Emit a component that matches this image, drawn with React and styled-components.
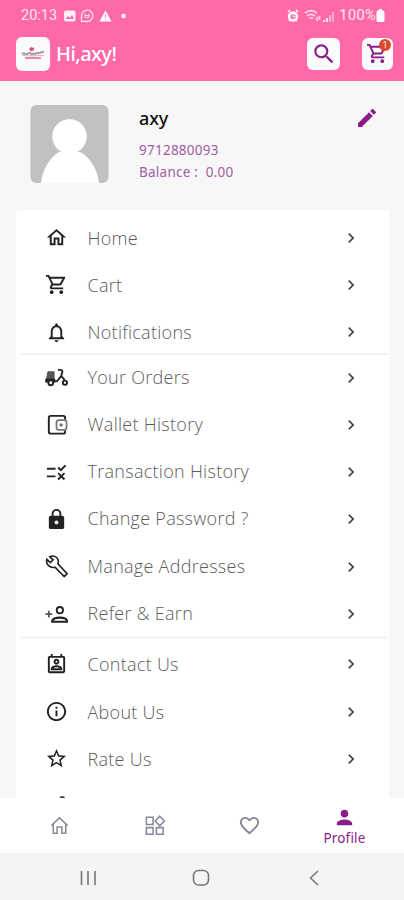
import React from "react"
import styled, { createGlobalStyle } from "styled-components"
import {
  MdChevronRight,
  MdEdit,
  MdInfoOutline,
  MdLock,
  MdNotificationsNone,
  MdOutlineHome,
  MdOutlinePermContactCalendar,
  MdOutlineShoppingCart,
  MdFavoriteBorder,
  MdPerson,
  MdRule,
  MdSearch,
  MdStarOutline,
} from "react-icons/md"

const sections = [
  [
    { label: "Home", icon: <MdOutlineHome /> },
    { label: "Cart", icon: <MdOutlineShoppingCart /> },
    { label: "Notifications", icon: <MdNotificationsNone /> },
  ],
  [
    { label: "Your Orders", icon: <ScooterIcon /> },
    { label: "Wallet History", icon: <WalletIcon /> },
    { label: "Transaction History", icon: <MdRule /> },
    { label: "Change Password ?", icon: <MdLock /> },
    { label: "Manage Addresses", icon: <WrenchIcon /> },
    { label: "Refer & Earn", icon: <PersonPlusIcon /> },
  ],
  [
    { label: "Contact Us", icon: <MdOutlinePermContactCalendar /> },
    { label: "About Us", icon: <MdInfoOutline /> },
    { label: "Rate Us", icon: <MdStarOutline /> },
  ],
]

export default function App() {
  return (
    <>
      <GlobalStyle />
      <Screen>
        <Header>
          <StatusBar>
            <Time>20:13</Time>
            <StatusLeft />
            <StatusRight />
            <Battery>100%</Battery>
            <BatteryIcon />
          </StatusBar>
          <TitleBar>
            <Logo>
              <LogoMark />
            </Logo>
            <Title>Hi,axy!</Title>
            <HeaderButton aria-label="Search" $size={26}>
              <MdSearch />
            </HeaderButton>
            <HeaderButton aria-label="Cart" $size={23} $last>
              <MdOutlineShoppingCart />
              <Badge>1</Badge>
            </HeaderButton>
          </TitleBar>
        </Header>

        <Content>
          <Profile>
            <Avatar />
            <Info>
              <Name>axy</Name>
              <Detail>9712880093</Detail>
              <Detail>Balance :&nbsp; 0.00</Detail>
            </Info>
            <EditButton aria-label="Edit">
              <MdEdit />
            </EditButton>
          </Profile>
          <Panel>
            {sections.map((items, i) => (
              <Section key={i}>
                {items.map((item) => (
                  <Row key={item.label}>
                    <RowIcon>{item.icon}</RowIcon>
                    <RowLabel $up={i === 1}>{item.label}</RowLabel>
                    <MdChevronRight />
                  </Row>
                ))}
              </Section>
            ))}
            <NextRow>
              <ShareIcon />
            </NextRow>
          </Panel>
        </Content>

        <TabBar>
          <Tab>
            <HomeTabIcon />
          </Tab>
          <Tab>
            <WidgetsIcon />
          </Tab>
          <Tab>
            <MdFavoriteBorder />
          </Tab>
          <Tab $active>
            <MdPerson />
            <span>Profile</span>
          </Tab>
        </TabBar>
        <SystemNav>
          <svg width="18" height="18" viewBox="0 0 18 18">
            <path d="M2.500 2v14M9 2v14M16 2v14" />
          </svg>
          <svg width="18" height="18" viewBox="0 0 18 18">
            <rect x="1.500" y="1.500" width="15" height="14.500" rx="5" />
          </svg>
          <svg width="18" height="18" viewBox="0 0 18 18">
            <path d="m13 2-7.500 7 7.500 7" />
          </svg>
        </SystemNav>
      </Screen>
    </>
  )
}

function StatusLeft() {
  return (
    <svg width="66" height="14" viewBox="0 0 66 14">
      <rect x="1" y="1.5" width="11.500" height="11" rx="2" fill="#ffeef5" />
      <path d="m2.500 10 2.500-3 2 2 2-3 2 4z" fill="#ff69a8" />
      <path
        d="M18.500 12.300V7a5.700 5.700 0 1 1 5.700 5.500z"
        fill="none"
        stroke="#ffe0ec"
        strokeWidth="1.300"
      />
      <path d="M22 4.500v4h4v-4M22 6.500h4" fill="none" stroke="#ffe0ec" />
      <path d="m42.500 1.500 6 11h-12z" fill="#fff" />
      <path d="M42.500 5v4M42.500 10v1.300" stroke="#ff8dbd" strokeWidth="1.200" />
      <circle cx="60.500" cy="7" r="2.200" fill="#fff" />
    </svg>
  )
}

function StatusRight() {
  return (
    <StatusIcons width="48" height="14" viewBox="0 0 48 14">
      <circle cx="6" cy="7.500" r="3.900" fill="none" stroke="#fff" strokeWidth="2.600" />
      <path d="M6 5.500v2.200h2" fill="none" stroke="#fff" />
      <path d="m1 3 2-2M9 1l2 2M2 12l1-1M10 12l-1-1" stroke="#fff" strokeWidth="1.600" />
      <path
        d="M18 4c4-3.200 8-3.200 12 0M20 7c3-2.200 5.500-2.200 8 0M22.500 9.500c1.500-1 2-1 3.500 0M30 8v4M32.500 7v4"
        fill="none"
        stroke="#ffd5e7"
        strokeWidth="1.700"
      />
      <path d="M37 11v2M40 9v4" stroke="#fff" strokeWidth="1.700" />
      <path d="M43 6v7M46 3v10" stroke="#ffb5d4" strokeWidth="1.800" />
    </StatusIcons>
  )
}

function BatteryIcon() {
  return (
    <svg width="9" height="13" viewBox="0 0 9 13">
      <path d="M3 0h3v1.500h1.500l1 1.500v9l-1 1h-6l-1-1v-9l1-1.500H3z" fill="#fff" />
    </svg>
  )
}

function LogoMark() {
  return (
    <svg width="26" height="16" viewBox="0 0 26 16">
      <path d="M9 3 11 1l2 1 1-1v3l-3 1.500z" fill="#d2567f" />
      <path
        d="M2 8c2-2 3 1 5 0s3-2 4 0 2-2 3 0 2-2 4-1 3-2 6-1"
        fill="none"
        stroke="#a99dab"
        strokeWidth="2"
      />
      <path d="M2 9.500q10 1 22-.3" fill="none" stroke="#d9b8c6" />
      <path d="M5 12h16" stroke="#e0708f" strokeWidth="1.600" />
    </svg>
  )
}

function Avatar() {
  return (
    <AvatarBox viewBox="0 0 78 78">
      <rect width="78" height="78" rx="6" fill="#c1c1c1" />
      <circle cx="39" cy="31.500" r="17.300" fill="#fff" />
      <path d="M10.500 78c2-16 10-26 18-31h21c9 5 17 15 19 31z" fill="#fff" />
    </AvatarBox>
  )
}

function ScooterIcon() {
  return (
    <svg viewBox="0 0 24 24" fill="none" stroke="currentColor">
      <path d="M3 6h6.500v8H1.500z" fill="#555" stroke="#555" strokeWidth="1" />
      <path d="M.5 13.500h10V17H.5z" fill="currentColor" strokeWidth=".5" />
      <circle cx="6" cy="17.500" r="2.500" fill="#fff" strokeWidth="2" />
      <circle cx="20.800" cy="17.500" r="2.200" strokeWidth="2" />
      <path d="M13.500 4h2.800c2 0 2 1.500 1.600 3l-1 3.500-4.500 5.500H9M17 10.500l3.500 4" strokeWidth="2" />
    </svg>
  )
}

function WalletIcon() {
  return (
    <svg viewBox="0 0 24 24" fill="none" stroke="currentColor">
      <path
        d="M21 7V5a2 2 0 0 0-2-2H6a2 2 0 0 0-2 2v14.500a2 2 0 0 0 2 2h13a2 2 0 0 0 2-2V18"
        strokeWidth="2"
      />
      <rect x="12" y="7.500" width="10.500" height="10" rx="2.500" stroke="#777" strokeWidth="1.800" />
      <circle cx="16.800" cy="12.500" r="1.300" fill="#777" stroke="#777" />
    </svg>
  )
}

function WrenchIcon() {
  return (
    <svg viewBox="0 0 24 24" fill="none" stroke="currentColor" strokeWidth="1.700">
      <path d="M2 4.500 5.500 8 8.500 5 5 1.800c3-1.300 6.500-.4 8 2 1.200 2 1.200 3.800.5 5.500L23 19.500 20 22.500l-9.500-9.800c-2.500.8-5 .2-7-1.800-1.700-1.700-2.300-4-1.500-6.400Z" />
    </svg>
  )
}

function PersonPlusIcon() {
  return (
    <svg viewBox="0 0 24 24" fill="none" stroke="currentColor">
      <path d="M.5 11.500h7M4 8v7" stroke="#555" strokeWidth="1.800" />
      <circle cx="15.500" cy="7.500" r="3.300" strokeWidth="1.900" />
      <path d="M7.500 19.500v-1c2-4.300 14-4.300 15.500 0v1z" strokeWidth="2.200" />
    </svg>
  )
}

function ShareIcon() {
  return (
    <svg viewBox="0 0 24 24" fill="#444">
      <circle cx="18" cy="5" r="3" />
      <circle cx="6" cy="12" r="3" />
      <circle cx="18" cy="19" r="3" />
    </svg>
  )
}

function HomeTabIcon() {
  return (
    <svg viewBox="0 0 24 24" fill="none" stroke="currentColor" strokeWidth="1.600">
      <path d="m3.500 12 8.500-8 8.500 8M5.500 10.500V20h4v-6.500h5V20h4v-9.500" />
    </svg>
  )
}

function WidgetsIcon() {
  return (
    <svg viewBox="0 0 24 24" fill="none" stroke="currentColor" strokeWidth="1.600">
      <path d="M3.500 3.500h7v7.500h-7zM3.500 14.200h7v7h-7zM14 14.200h7v7h-7zM17.500 2.300l4.800 5-4.800 5-4.800-5z" />
    </svg>
  )
}

const GlobalStyle = createGlobalStyle`
  * {
    box-sizing: border-box;
  }
  body {
    margin: 0;
    font-family: "Open Sans", "Noto Sans", sans-serif;
  }
  svg {
    display: block;
    flex-shrink: 0;
  }
  button {
    border: 0;
    padding: 0;
    font: inherit;
  }
`

const Screen = styled.div`
  display: flex;
  flex-direction: column;
  width: 404px;
  height: 900px;
  overflow: hidden;
  background: #f7f7f7;
`

const Header = styled.header`
  height: 81px;
  background: #ff69a8;
`

const StatusBar = styled.div`
  display: flex;
  align-items: center;
  height: 31px;
  padding: 0 19px 0 21px;
  color: #ffe6f0;
`

const Time = styled.span`
  width: 42px;
  font-family: Roboto, sans-serif;
  font-size: 14.5px;
`

const StatusIcons = styled.svg`
  margin-left: auto;
`

const Battery = styled.span`
  margin: 0 0 0 4px;
  font-family: Roboto, sans-serif;
  font-size: 14.5px;
  letter-spacing: 0.4px;
`

const TitleBar = styled.div`
  display: flex;
  align-items: center;
  height: 45px;
  padding: 0 11px 0 16px;
`

const Logo = styled.div`
  display: grid;
  place-items: center;
  width: 34px;
  height: 34px;
  border-radius: 6px;
  background: #fafafa;
`

const Title = styled.h1`
  margin: 0 auto 0 6px;
  color: #fff;
  font-family: "Noto Sans", sans-serif;
  font-size: 20px;
  font-weight: 500;
  letter-spacing: -0.55px;
`

const HeaderButton = styled.button`
  position: relative;
  display: grid;
  place-items: center;
  width: ${({ $last }) => ($last ? "31px" : "33px")};
  height: 32px;
  margin-left: ${({ $last }) => ($last ? "22px" : "0")};
  border-radius: 6px;
  background: #fafafa;
  color: #861f87;

  svg {
    width: ${({ $size }) => $size}px;
    height: ${({ $size }) => $size}px;
  }
`

const Badge = styled.span`
  position: absolute;
  top: 1px;
  right: 2px;
  width: 12px;
  height: 12px;
  border-radius: 50%;
  background: #dc4a2c;
  color: #fff;
  font-size: 9px;
  line-height: 12px;
  text-align: center;
`

const Content = styled.main`
  height: 717px;
  overflow: hidden;
`

const Profile = styled.section`
  display: flex;
  height: 129px;
  padding: 24px 25px 0 30px;
`

const AvatarBox = styled.svg`
  width: 79px;
  height: 78px;
`

const Info = styled.div`
  flex: 1;
  padding-left: 30px;
`

const Name = styled.div`
  margin-bottom: 7px;
  color: #111;
  font-family: "Noto Sans", sans-serif;
  font-size: 18px;
  font-weight: 500;
  line-height: 27px;
  letter-spacing: -0.1px;
`

const Detail = styled.div`
  color: #a060a0;
  font-family: "Noto Sans", sans-serif;
  font-size: 13.5px;
  line-height: 22px;
  letter-spacing: 0.25px;
`

const EditButton = styled.button`
  width: 24px;
  height: 26px;
  background: none;
  color: #8b1d8b;

  svg {
    width: 24px;
    height: 24px;
  }
`

const Panel = styled.div`
  width: 373px;
  margin-left: 16px;
  padding-top: 4px;
  border-radius: 3px;
  background: #fff;
`

const Section = styled.div`
  & + &::before {
    content: "";
    display: block;
    height: 2px;
    margin: -3px 2px -1px 5px;
    background: #f2f2f2;
  }
  & + & + &::before {
    height: 3px;
    margin-top: -2px;
    margin-bottom: 2px;
    background: #f5f5f5;
  }
`

const Row = styled.div`
  display: flex;
  align-items: center;
  height: 47.3px;
  padding: 0 28px 0 29px;
  color: #222;

  > svg {
    width: 20px;
    height: 20px;
    color: #444;
  }
`

const RowIcon = styled.span`
  svg {
    width: 23px;
    height: 23px;
  }
`

const RowLabel = styled.span`
  flex: 1;
  padding-left: 19.5px;
  padding-bottom: ${({ $up }) => ($up ? "2px" : "0")};
  color: #5c5c5c;
  font-size: 18px;
  font-weight: 300;
  font-variant-ligatures: none;
  letter-spacing: 0.28px;
`

/* top edge of the row that scrolls under the tab bar */
const NextRow = styled.div`
  height: 47px;
  padding: 11px 0 0 29px;

  svg {
    width: 23px;
    height: 23px;
  }
`

const TabBar = styled.nav`
  display: grid;
  grid-template-columns: repeat(4, 95px);
  height: 55px;
  padding-left: 12px;
  background: #fff;
`

const Tab = styled.div`
  display: flex;
  flex-direction: column;
  align-items: center;
  gap: 1px;
  padding-top: ${({ $active }) => ($active ? "8px" : "16px")};
  color: ${({ $active }) => ($active ? "#8b1d8b" : "#858899")};
  font-family: "Noto Sans", sans-serif;
  font-size: 13.5px;
  line-height: 17px;
  letter-spacing: 0.15px;

  svg {
    width: 23px;
    height: 23px;
  }
`

const SystemNav = styled.footer`
  display: flex;
  align-items: center;
  gap: 95px;
  height: 47px;
  padding: 2px 0 0 79px;
  background: #f4f4f4;

  svg {
    fill: none;
    stroke: #777;
    stroke-width: 1.6px;
  }
`
